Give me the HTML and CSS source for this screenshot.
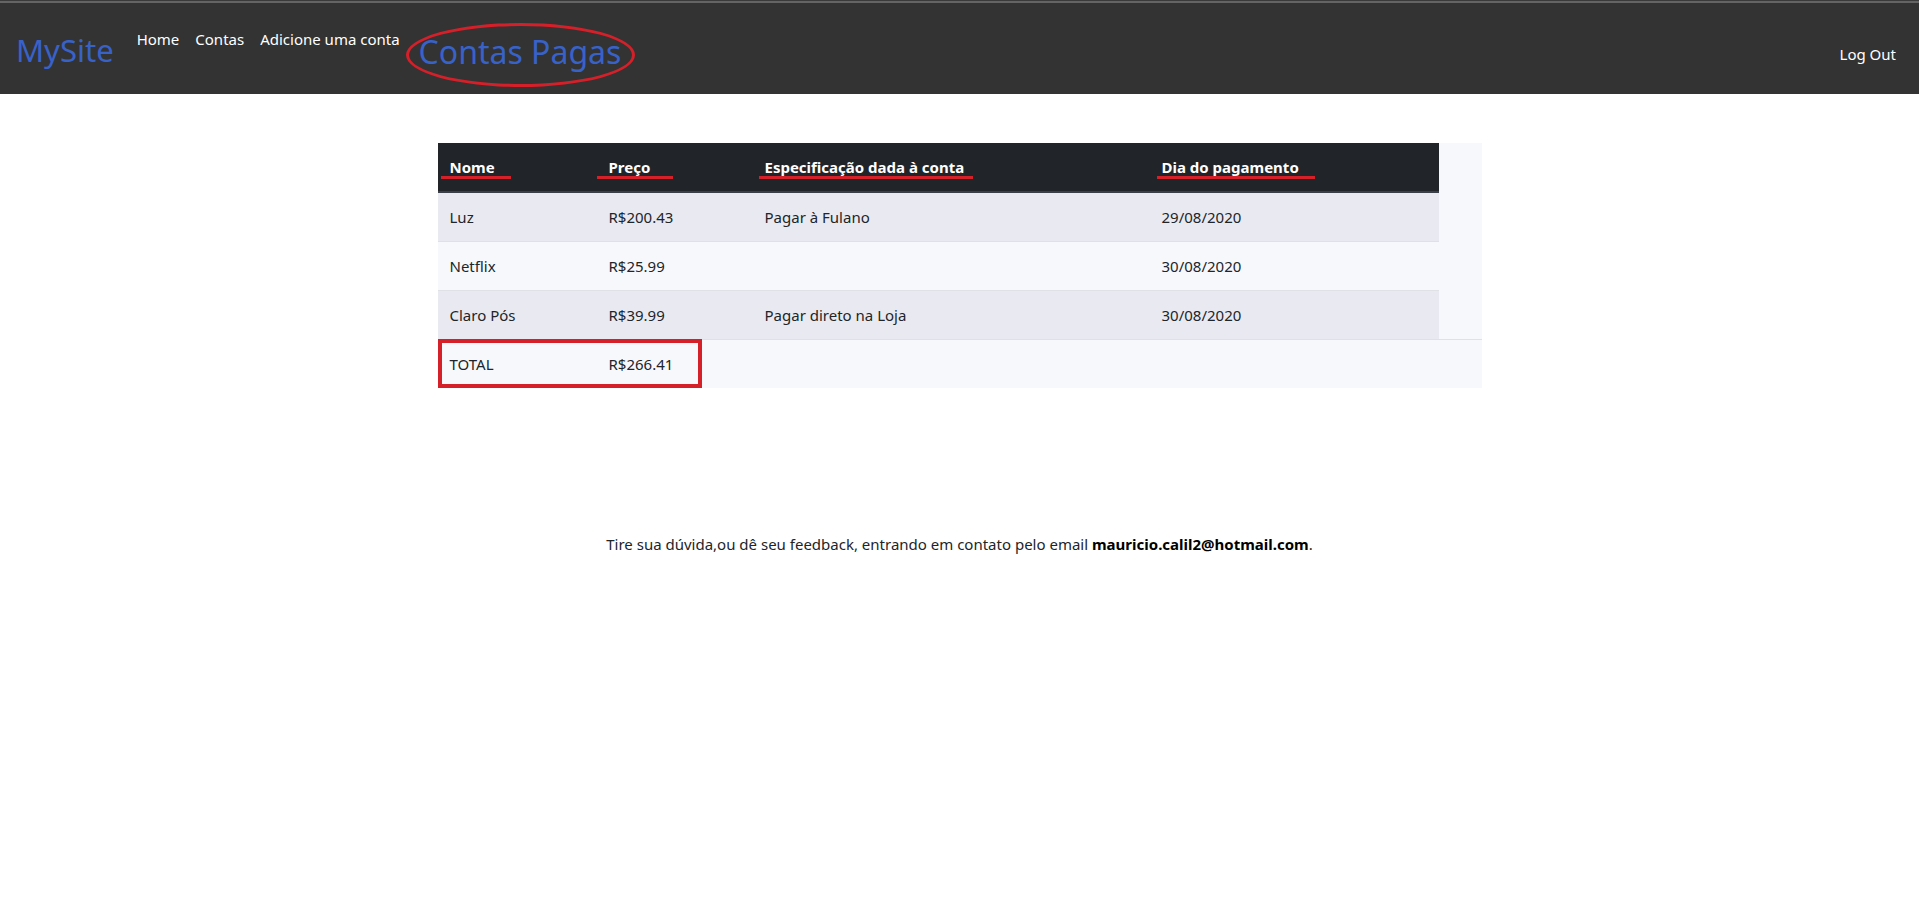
FILE: index.html
```html
<!DOCTYPE html>
<html lang="pt-BR">
<head>
<meta charset="utf-8">
<title>Contas Pagas</title>
<link rel="stylesheet" href="styles.css">
</head>
<body>
<header class="navbar">
  <a class="brand" href="#">MySite</a>
  <nav class="nav-links">
    <a href="#">Home</a>
    <a href="#">Contas</a>
    <a href="#">Adicione uma conta</a>
  </nav>
  <h1 class="page-title">Contas Pagas<span class="ellipse"></span></h1>
  <a class="logout" href="#">Log Out</a>
</header>

<main class="content">
  <section class="panel">
    <table class="bills">
      <thead>
        <tr>
          <th class="c-nome">Nome<span class="mark mark-nome"></span></th>
          <th class="c-preco">Preço<span class="mark mark-preco"></span></th>
          <th class="c-spec">Especificação dada à conta<span class="mark mark-spec"></span></th>
          <th class="c-dia">Dia do pagamento<span class="mark mark-dia"></span></th>
        </tr>
      </thead>
      <tbody>
        <tr><td>Luz</td><td>R$200.43</td><td>Pagar à Fulano</td><td>29/08/2020</td></tr>
        <tr><td>Netflix</td><td>R$25.99</td><td></td><td>30/08/2020</td></tr>
        <tr><td>Claro Pós</td><td>R$39.99</td><td>Pagar direto na Loja</td><td>30/08/2020</td></tr>
      </tbody>
    </table>
    <div class="total-row">
      <span class="total-label">TOTAL</span>
      <span class="total-value">R$266.41</span>
    </div>
    <span class="total-box"></span>
  </section>

  <p class="footer-note">Tire sua dúvida,ou dê seu feedback, entrando em contato pelo email <strong>mauricio.calil2@hotmail.com</strong>.</p>
</main>
</body>
</html>
```

FILE: styles.css
```css
* { box-sizing: border-box; }

html, body {
  margin: 0;
  padding: 0;
  background: #ffffff;
}

body {
  font-family: "Noto Sans", "Open Sans", "Liberation Sans", sans-serif;
  font-size: 15px;
  color: #212529;
}

a { text-decoration: none; }

/* ---------- Navbar ---------- */
.navbar {
  display: flex;
  align-items: flex-start;
  height: 94px;
  padding: 0 23px 0 16px;
  background: #333333;
  box-shadow: inset 0 1px 0 #3a3a3a, inset 0 3px 0 #646464;
}

.brand {
  margin-top: 28px;
  font-size: 31px;
  line-height: 44px;
  color: #3862c8;
  margin-right: 15px;
}

.nav-links {
  display: flex;
  margin-top: 27px;
}

.nav-links a {
  color: #ffffff;
  font-size: 15px;
  line-height: 24px;
  padding: 0 8px;
}

.page-title {
  position: relative;
  margin: 30px 0 0 11px;
  font-size: 32px;
  font-weight: 400;
  line-height: 44px;
  color: #3862c8;
}

.ellipse {
  position: absolute;
  left: -13px;
  top: -7px;
  width: 229px;
  height: 64px;
  border: 3px solid #d52029;
  border-radius: 50%;
}

.logout {
  margin-left: auto;
  margin-top: 42px;
  color: #ffffff;
  font-size: 15px;
  line-height: 24px;
}

/* ---------- Content ---------- */
.content {
  padding-top: 49px;
}

.panel {
  position: relative;
  width: 1044px;
  margin: 0 auto;
  background: #f7f8fc;
}

.bills {
  width: 1001px;
  border-collapse: collapse;
  table-layout: fixed;
}

.bills th,
.bills td {
  padding: 12px;
  line-height: 24px;
  text-align: left;
  vertical-align: top;
}

.bills th {
  position: relative;
  background: #212529;
  color: #ffffff;
  font-weight: 700;
  border-bottom: 2px solid #3b4048;
}

.c-nome { width: 159px; }
.c-preco { width: 156px; }
.c-spec { width: 397px; }
.c-dia { width: 289px; }

.bills td {
  border-top: 1px solid #dfe1e7;
}

.bills tbody tr:first-child td { border-top: 0; }

.bills tbody tr:nth-child(odd) td { background: #e9eaf1; }
.bills tbody tr:nth-child(even) td { background: #f7f8fc; }

.mark {
  position: absolute;
  top: 33px;
  height: 3px;
  background: #d52029;
}
.mark-nome { left: 3px; width: 70px; }
.mark-preco { left: 0; width: 76px; }
.mark-spec { left: 6px; width: 214px; }
.mark-dia { left: 7px; width: 158px; }

.total-row {
  display: flex;
  border-top: 1px solid #dfe1e7;
  line-height: 24px;
}

.total-label {
  width: 159px;
  padding: 12px;
}

.total-value {
  padding: 12px;
}

.total-box {
  position: absolute;
  left: 0;
  bottom: 0;
  width: 264px;
  height: 49px;
  border: 4px solid #d52029;
}

.footer-note {
  margin: 144px 0 0;
  text-align: center;
  line-height: 24px;
  color: #212529;
}

.footer-note strong {
  color: #000000;
  font-weight: 700;
}
```
